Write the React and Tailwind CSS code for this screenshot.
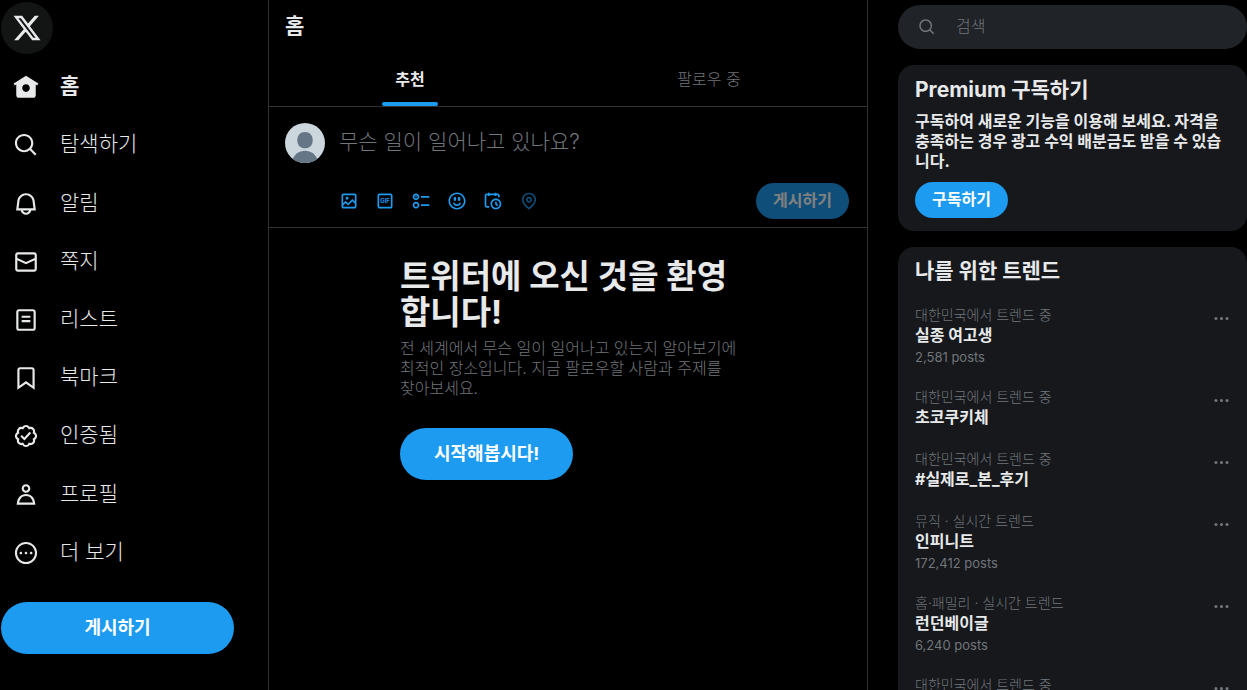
const ICONS = {
  x: "M18.244 2.25h3.308l-7.227 8.26 8.502 11.24H16.17l-5.214-6.817L4.99 21.75H1.68l7.73-8.835L1.254 2.25H8.08l4.713 6.231zm-1.161 17.52h1.833L7.084 4.126H5.117z",
  home: "M12 1.696L.622 8.807l1.06 1.696L3 9.679V19.5C3 20.881 4.119 22 5.5 22h13c1.381 0 2.5-1.119 2.5-2.5V9.679l1.318.824 1.06-1.696L12 1.696zM12 16.5c-1.933 0-3.5-1.567-3.5-3.5s1.567-3.5 3.5-3.5 3.5 1.567 3.5 3.5-1.567 3.5-3.5 3.5z",
  search: "M10.25 3.75c-3.59 0-6.5 2.91-6.5 6.5s2.91 6.5 6.5 6.5c1.795 0 3.419-.726 4.596-1.904 1.178-1.177 1.904-2.801 1.904-4.596 0-3.59-2.91-6.5-6.5-6.5zm-8.5 6.5c0-4.694 3.806-8.5 8.5-8.5s8.5 3.806 8.5 8.5c0 1.986-.682 3.815-1.824 5.262l4.781 4.781-1.414 1.414-4.781-4.781c-1.447 1.142-3.276 1.824-5.262 1.824-4.694 0-8.5-3.806-8.5-8.5z",
  bell: "M19.993 9.042C19.48 5.017 16.054 2 11.996 2s-7.49 3.021-7.999 7.051L2.866 18H7.1c.463 2.282 2.481 4 4.9 4s4.437-1.718 4.9-4h4.236l-1.143-8.958zM12 20c-1.306 0-2.417-.835-2.829-2h5.658c-.412 1.165-1.523 2-2.829 2zm-6.866-4l.847-6.698C6.364 6.272 8.941 4 11.996 4s5.627 2.268 6.013 5.295L18.864 16H5.134z",
  mail: "M1.998 5.5c0-1.381 1.119-2.5 2.5-2.5h15c1.381 0 2.5 1.119 2.5 2.5v13c0 1.381-1.119 2.5-2.5 2.5h-15c-1.381 0-2.5-1.119-2.5-2.5v-13zm2.5-.5c-.276 0-.5.224-.5.5v2.764l8 3.638 8-3.636V5.5c0-.276-.224-.5-.5-.5h-15zm15.5 5.463l-8 3.636-8-3.638V18.5c0 .276.224.5.5.5h15c.276 0 .5-.224.5-.5v-8.037z",
  list: "M3 4.5C3 3.12 4.12 2 5.5 2h13C19.88 2 21 3.12 21 4.5v15c0 1.38-1.12 2.5-2.5 2.5h-13C4.12 22 3 20.88 3 19.5v-15zM5.5 4c-.28 0-.5.22-.5.5v15c0 .28.22.5.5.5h13c.28 0 .5-.22.5-.5v-15c0-.28-.22-.5-.5-.5h-13zM16 10H8V8h8v2zm-8 2h8v2H8v-2z",
  bookmark: "M4 4.5C4 3.12 5.119 2 6.5 2h11C18.881 2 20 3.12 20 4.5v18.44l-8-5.71-8 5.71V4.5zM6.5 4c-.276 0-.5.22-.5.5v14.56l6-4.29 6 4.29V4.5c0-.28-.224-.5-.5-.5h-11z",
  verified: "M8.52 3.59c.8-1.1 2.04-1.84 3.48-1.84s2.68.74 3.49 1.84c1.34-.21 2.74.14 3.76 1.16s1.37 2.42 1.16 3.77c1.1.8 1.84 2.04 1.84 3.48s-.74 2.68-1.84 3.48c.21 1.34-.14 2.75-1.16 3.77s-2.42 1.37-3.76 1.16c-.8 1.1-2.05 1.84-3.49 1.84s-2.68-.74-3.48-1.84c-1.34.21-2.75-.14-3.77-1.16-1.01-1.02-1.37-2.42-1.16-3.77-1.09-.8-1.84-2.04-1.84-3.48s.75-2.68 1.84-3.48c-.21-1.35.14-2.75 1.16-3.77s2.43-1.37 3.77-1.16zm3.48.16c-.85 0-1.66.53-2.12 1.43l-.38.77-.82-.27c-.96-.32-1.91-.12-2.51.49-.6.6-.8 1.54-.49 2.51l.27.81-.77.39c-.9.46-1.43 1.27-1.43 2.12s.53 1.66 1.43 2.12l.77.39-.27.81c-.31.97-.11 1.91.49 2.51.6.61 1.55.81 2.51.49l.82-.27.38.77c.46.9 1.27 1.43 2.12 1.43s1.66-.53 2.12-1.43l.39-.77.82.27c.96.32 1.9.12 2.51-.49.6-.6.8-1.55.48-2.51l-.26-.81.76-.39c.91-.46 1.43-1.27 1.43-2.12s-.52-1.66-1.43-2.12l-.77-.39.27-.81c.32-.97.12-1.91-.48-2.51-.61-.61-1.55-.81-2.51-.49l-.82.27-.39-.77c-.46-.9-1.27-1.43-2.12-1.43zm4.74 5.68l-6.2 6.77-3.74-3.74 1.41-1.42 2.26 2.26 4.8-5.23 1.47 1.36z",
  profile: "M5.651 19h12.698c-.337-1.8-1.023-3.21-1.945-4.19C15.318 13.65 13.838 13 12 13s-3.317.65-4.404 1.81c-.922.98-1.608 2.39-1.945 4.19zm.486-5.56C7.627 11.85 9.648 11 12 11s4.373.85 5.863 2.44c1.477 1.58 2.366 3.8 2.632 6.46l.11 1.1H3.395l.11-1.1c.266-2.66 1.155-4.88 2.632-6.46zM12 4c-1.105 0-2 .9-2 2s.895 2 2 2 2-.9 2-2-.895-2-2-2zM8 6c0-2.21 1.791-4 4-4s4 1.79 4 4-1.791 4-4 4-4-1.79-4-4z",
  more: "M3.75 12c0-4.56 3.69-8.25 8.25-8.25s8.25 3.69 8.25 8.25-3.69 8.25-8.25 8.25S3.75 16.56 3.75 12zM12 1.75C6.34 1.75 1.75 6.34 1.75 12S6.34 22.25 12 22.25 22.25 17.66 22.25 12 17.66 1.75 12 1.75zm-4.75 11.5c.69 0 1.25-.56 1.25-1.25s-.56-1.25-1.25-1.25S6 11.31 6 12s.56 1.25 1.25 1.25zm9.5 0c.69 0 1.25-.56 1.25-1.25s-.56-1.25-1.25-1.25-1.25.56-1.25 1.25.56 1.25 1.25 1.25zM13.25 12c0 .69-.56 1.25-1.25 1.25s-1.25-.56-1.25-1.25.56-1.25 1.25-1.25 1.25.56 1.25 1.25z",
  media: "M3 5.5C3 4.119 4.119 3 5.5 3h13C19.881 3 21 4.119 21 5.5v13c0 1.381-1.119 2.5-2.5 2.5h-13C4.119 21 3 19.881 3 18.5v-13zM5.5 5c-.276 0-.5.224-.5.5v9.086l3-3 3 3 5-5 3 3V5.5c0-.276-.224-.5-.5-.5h-13zM19 15.414l-3-3-5 5-3-3-3 3V18.5c0 .276.224.5.5.5h13c.276 0 .5-.224.5-.5v-3.086zM9.75 7C8.784 7 8 7.784 8 8.75s.784 1.75 1.75 1.75 1.75-.784 1.75-1.75S10.716 7 9.75 7z",
  frame: "M3 5.5C3 4.119 4.12 3 5.5 3h13C19.88 3 21 4.119 21 5.5v13c0 1.381-1.12 2.5-2.5 2.5h-13C4.12 21 3 19.881 3 18.5v-13zM5.5 5c-.28 0-.5.224-.5.5v13c0 .276.22.5.5.5h13c.28 0 .5-.224.5-.5v-13c0-.276-.22-.5-.5-.5h-13z",
  poll: "M6 5c-1.1 0-2 .895-2 2s.9 2 2 2 2-.895 2-2-.9-2-2-2zM2 7c0-2.209 1.79-4 4-4s4 1.791 4 4-1.79 4-4 4-4-1.791-4-4zm20 1H12V6h10v2zM6 15c-1.1 0-2 .895-2 2s.9 2 2 2 2-.895 2-2-.9-2-2-2zm-4 2c0-2.209 1.79-4 4-4s4 1.791 4 4-1.79 4-4 4-4-1.791-4-4zm20 1H12v-2h10v2zM7 7c0 .552-.45 1-1 1s-1-.448-1-1 .45-1 1-1 1 .448 1 1z",
  emoji: "M8 9.5C8 8.119 8.672 7 9.5 7S11 8.119 11 9.5 10.328 12 9.5 12 8 10.881 8 9.5zm6.5 2.5c.828 0 1.5-1.119 1.5-2.5S15.328 7 14.5 7 13 8.119 13 9.5s.672 2.5 1.5 2.5zM12 16c-2.224 0-3.021-2.227-3.051-2.316l-1.897.633c.05.15 1.271 3.684 4.949 3.684s4.898-3.533 4.949-3.684l-1.896-.638c-.033.095-.83 2.322-3.053 2.322zm10.25-4.001c0 5.652-4.598 10.25-10.25 10.25S1.75 17.652 1.75 12 6.348 1.75 12 1.75 22.25 6.348 22.25 12zm-2 0c0-4.549-3.701-8.25-8.25-8.25S3.75 7.451 3.75 12s3.701 8.25 8.25 8.25 8.25-3.701 8.25-8.25z",
  schedule: "M6 3V2h2v1h6V2h2v1h1.5C18.88 3 20 4.119 20 5.5v2h-2v-2c0-.276-.22-.5-.5-.5H16v1h-2V5H8v1H6V5H4.5c-.28 0-.5.224-.5.5v12c0 .276.22.5.5.5h3v2h-3C3.12 20 2 18.881 2 17.5v-12C2 4.119 3.12 3 4.5 3H6zm9.5 8c-2.49 0-4.5 2.015-4.5 4.5s2.01 4.5 4.5 4.5 4.5-2.015 4.5-4.5-2.01-4.5-4.5-4.5zM9 15.5C9 11.91 11.91 9 15.5 9s6.5 2.91 6.5 6.5-2.91 6.5-6.5 6.5S9 19.09 9 15.5zm5.5-2.5h2v2.086l1.71 1.707-1.42 1.414-2.29-2.293V13z",
  location: "M12 7c-1.93 0-3.5 1.57-3.5 3.5S10.07 14 12 14s3.5-1.57 3.5-3.5S13.93 7 12 7zm0 5c-.827 0-1.5-.673-1.5-1.5S11.173 9 12 9s1.5.673 1.5 1.5S12.827 12 12 12zm0-10c-4.687 0-8.5 3.813-8.5 8.5 0 5.967 7.621 11.116 7.945 11.332l.555.37.555-.37c.324-.216 7.945-5.365 7.945-11.332C20.5 5.813 16.687 2 12 2zm0 17.77c-1.665-1.241-6.5-5.196-6.5-9.27C5.5 6.916 8.416 4 12 4s6.5 2.916 6.5 6.5c0 4.073-4.835 8.028-6.5 9.27z",
  dots: "M3 12c0-1.1.9-2 2-2s2 .9 2 2-.9 2-2 2-2-.9-2-2zm9 2c1.1 0 2-.9 2-2s-.9-2-2-2-2 .9-2 2 .9 2 2 2zm7 0c1.1 0 2-.9 2-2s-.9-2-2-2-2 .9-2 2 .9 2 2 2z",
};

function Icon({ name, className, children }) {
  return (
    <svg viewBox="0 0 24 24" fill="currentColor" aria-hidden="true" className={className}>
      <path d={ICONS[name]} />
      {children}
    </svg>
  );
}

const NAV = [
  { icon: "home", label: "홈", active: true },
  { icon: "search", label: "탐색하기" },
  { icon: "bell", label: "알림" },
  { icon: "mail", label: "쪽지" },
  { icon: "list", label: "리스트" },
  { icon: "bookmark", label: "북마크" },
  { icon: "verified", label: "인증됨" },
  { icon: "profile", label: "프로필" },
  { icon: "more", label: "더 보기" },
];

const TOOLS = [
  { icon: "media", label: "미디어" },
  { icon: "frame", label: "GIF" },
  { icon: "poll", label: "투표" },
  { icon: "emoji", label: "이모티콘" },
  { icon: "schedule", label: "예약" },
  { icon: "location", label: "위치", disabled: true },
];

const TRENDS = [
  { meta: "대한민국에서 트렌드 중", name: "실종 여고생", posts: "2,581 posts" },
  { meta: "대한민국에서 트렌드 중", name: "초코쿠키체" },
  { meta: "대한민국에서 트렌드 중", name: "#실제로_본_후기" },
  { meta: "뮤직 · 실시간 트렌드", name: "인피니트", posts: "172,412 posts" },
  { meta: "홈·패밀리 · 실시간 트렌드", name: "런던베이글", posts: "6,240 posts" },
  { meta: "대한민국에서 트렌드 중" },
];

function Sidebar() {
  return (
    <header className="flex w-[268px] shrink-0 flex-col pl-px pt-0.5">
      <a href="#" aria-label="X" className="flex size-[52px] items-center justify-center rounded-full bg-[#131515]">
        <Icon name="x" className="size-[30px]" />
      </a>
      <nav className="mt-1 flex h-[524px] flex-col">
        {NAV.map((item) => (
          <a key={item.label} href="#" className="flex flex-1 items-center gap-[21px] pl-3">
            <Icon name={item.icon} className="size-[26px]" />
            <span className={item.active ? "pb-0.5 text-[21px] leading-6 font-bold" : "pb-0.5 text-[21px] leading-6"}>
              {item.label}
            </span>
          </a>
        ))}
      </nav>
      <button type="button" className="mt-5 mr-[34px] h-[52px] rounded-full bg-[#1d9bf0] text-lg font-bold text-white">
        게시하기
      </button>
    </header>
  );
}

function Avatar() {
  return (
    <svg viewBox="0 0 40 40" className="size-10 shrink-0" role="img" aria-label="프로필 사진">
      <clipPath id="avatar-clip">
        <circle cx="20" cy="20" r="20" />
      </clipPath>
      <g clipPath="url(#avatar-clip)">
        <rect width="40" height="40" fill="#ccd6dd" />
        <path d="M20 9c4.700 0 7.700 3.300 7.700 8.200 0 5-3 8.100-7.700 8.100s-7.700-3.100-7.700-8.100C12.300 12.300 15.300 9 20 9z" fill="#657786" />
        <path d="M7 38c2.200-6.700 7-10.200 13-10.200S30.800 31.300 33 38v3H7z" fill="#657786" />
      </g>
    </svg>
  );
}

function Composer() {
  return (
    <form className="flex gap-3 border-b border-[#2f3336] pt-4 pr-[18px] pb-2 pl-4">
      <Avatar />
      <div className="min-w-0 flex-1">
        <input
          aria-label="게시물 내용"
          placeholder="무슨 일이 일어나고 있나요?"
          className="block h-9 w-full bg-transparent pl-0.5 text-[21px] outline-none placeholder:text-[#71767b]"
        />
        <div className="mt-6 flex items-center justify-between">
          <div className="-ml-1.5 flex">
            {TOOLS.map((tool) => (
              <button
                key={tool.label}
                type="button"
                aria-label={tool.label}
                disabled={tool.disabled}
                className="flex size-9 items-center justify-center text-[#1d9bf0] disabled:opacity-50"
              >
                <Icon name={tool.icon} className="size-5">
                  {tool.icon === "frame" && (
                    <text x="12" y="14.500" textAnchor="middle" className="font-['Inter'] text-[7px] font-bold">
                      GIF
                    </text>
                  )}
                </Icon>
              </button>
            ))}
          </div>
          <button type="button" disabled className="h-9 rounded-full bg-[#1d9bf0] px-[17px] pb-0.5 text-base font-bold text-white opacity-50">
            게시하기
          </button>
        </div>
      </div>
    </form>
  );
}

function Timeline() {
  return (
    <main className="min-w-0 flex-1 border-x border-[#2f3336]">
      <h1 className="flex h-[53px] items-center px-4 pb-0.5 text-[21px] font-bold">홈</h1>
      <div role="tablist" className="flex h-[54px] border-b border-[#2f3336] text-base">
        <button type="button" role="tab" aria-selected="true" className="flex grow justify-center px-4 font-bold">
          <span className="relative flex h-full items-center pb-0.5">
            추천
            <span className="absolute bottom-0 left-1/2 h-1 w-14 -translate-x-1/2 rounded-full bg-[#1d9bf0]" />
          </span>
        </button>
        <button type="button" role="tab" aria-selected="false" className="flex grow items-center justify-center px-4 pb-0.5 text-[#71767b]">
          팔로우 중
        </button>
      </div>
      <Composer />
      <section className="mx-auto w-[336px] pt-[30px]">
        <h2 className="text-[33px] leading-9 font-bold">트위터에 오신 것을 환영합니다!</h2>
        <p className="mt-2 -mr-2 text-base leading-5 break-keep text-[#71767b]">
          전 세계에서 무슨 일이 일어나고 있는지 알아보기에 최적인 장소입니다. 지금 팔로우할 사람과 주제를 찾아보세요.
        </p>
        <button type="button" className="mt-[30px] h-[52px] rounded-full bg-[#1d9bf0] px-[34px] text-lg font-bold text-white">
          시작해봅시다!
        </button>
      </section>
    </main>
  );
}

function Aside() {
  return (
    <aside className="flex w-[379px] shrink-0 flex-col gap-4 pt-[5px] pl-[30px]">
      <label className="flex h-11 shrink-0 items-center gap-5 rounded-full bg-[#202327] pl-5 text-[#71767b]">
        <Icon name="search" className="size-[18px]" />
        <input aria-label="검색" placeholder="검색" className="min-w-0 flex-1 bg-transparent pb-0.5 text-base outline-none placeholder:text-[#71767b]" />
      </label>
      <section className="shrink-0 rounded-2xl bg-[#16181c] px-[17px] py-[13px]">
        <h2 className="text-[21px] leading-6 font-bold">Premium 구독하기</h2>
        <p className="mt-[9px] text-base leading-5 font-bold">
          구독하여 새로운 기능을 이용해 보세요. 자격을 충족하는 경우 광고 수익 배분금도 받을 수 있습니다.
        </p>
        <button type="button" className="mt-[11px] h-9 rounded-full bg-[#1d9bf0] px-[17px] pb-0.5 text-base font-bold text-white">
          구독하기
        </button>
      </section>
      <section className="flex-1 rounded-t-2xl bg-[#16181c] pt-3">
        <h2 className="mb-3 px-[17px] text-[21px] leading-6 font-bold">나를 위한 트렌드</h2>
        {TRENDS.map((trend, i) => (
          <article key={i} className="flex items-start justify-between py-3 pr-4 pl-[17px]">
            <div>
              <p className="text-sm leading-4 text-[#71767b]">{trend.meta}</p>
              {trend.name && <h3 className="pt-0.5 text-base leading-5 font-bold">{trend.name}</h3>}
              {trend.posts && <p className="pt-1 text-[13px] leading-4 font-normal text-[#71767b]">{trend.posts}</p>}
            </div>
            <button type="button" aria-label="더 보기" className="mt-0.5 text-[#71767b]">
              <Icon name="dots" className="size-[19px]" />
            </button>
          </article>
        ))}
      </section>
    </aside>
  );
}

export default function App() {
  return (
    <div lang="ko" className="flex h-screen overflow-hidden bg-black font-['Inter','Noto_Sans_CJK_KR',sans-serif] font-light text-[#e7e9ea]">
      <Sidebar />
      <Timeline />
      <Aside />
    </div>
  );
}
